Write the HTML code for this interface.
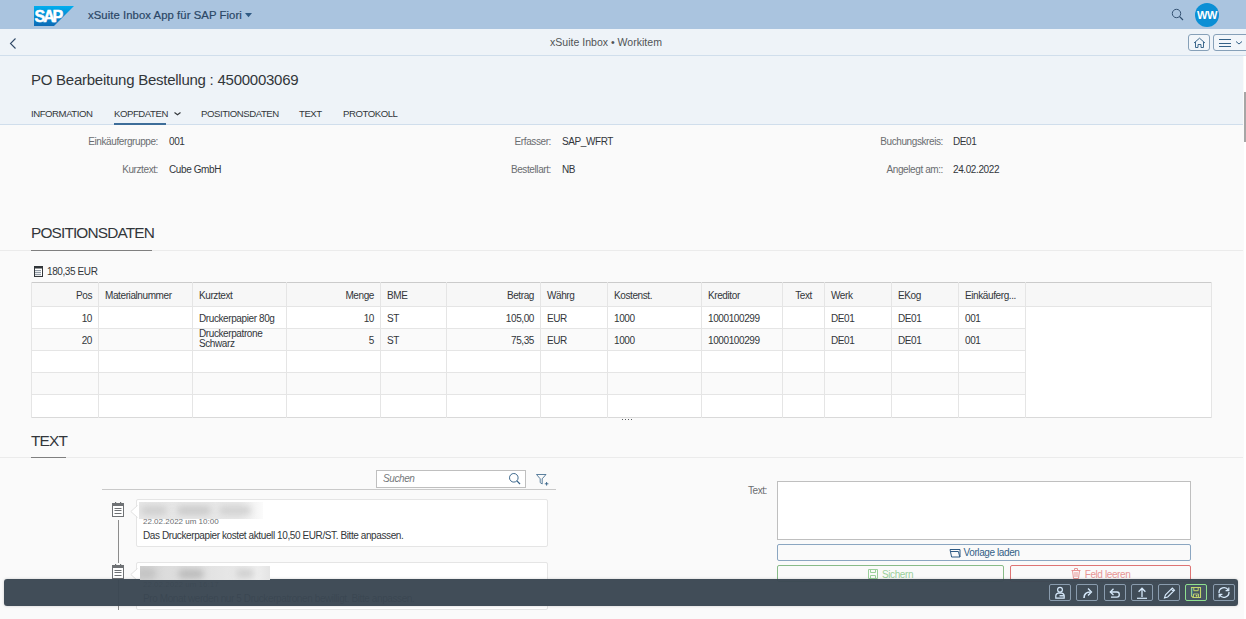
<!DOCTYPE html>
<html><head><meta charset="utf-8">
<style>
*{box-sizing:border-box;margin:0;padding:0}
html,body{width:1246px;height:619px;overflow:hidden;background:#fafafa;font-family:"Liberation Sans",sans-serif;color:#32363a}
.a{position:absolute;white-space:nowrap}
#shell{position:absolute;left:0;top:0;width:1246px;height:29px;background:#aac4df}
#nav{position:absolute;left:0;top:29px;width:1246px;height:27px;background:#eef3f8;border-bottom:1px solid #d0deec}
#hdr{position:absolute;left:0;top:56px;width:1243px;height:69px;background:#eef3f8;border-bottom:1px solid #d0deec}
.lbl{font-size:10px;letter-spacing:-0.4px;color:#6a6d70;text-align:right}
.val{font-size:10px;letter-spacing:-0.4px;color:#32363a}
.tab{font-size:9.6px;letter-spacing:-0.45px;color:#32363a;top:108px}
table{border-collapse:collapse;position:absolute;left:31px;top:282px;table-layout:fixed;background:#fff}
td,th{border:1px solid #e5e5e5;font-size:10px;letter-spacing:-0.4px;font-weight:normal;color:#32363a;height:22px;padding:0 5px;white-space:nowrap;overflow:hidden}
th{background:#f5f5f5;text-align:left;height:24px}
tr.alt td{background:#fafafa}
.r{text-align:right}

.hl{height:1px;background:#e5e5e5}
.vl{width:1px;background:#e5e5e5}
.tc{font-size:10px;letter-spacing:-0.4px;color:#32363a;padding:0 6px}
.l{text-align:left}.r{text-align:right}.c{text-align:center}
.card{position:absolute;left:136px;width:412px;height:48px;background:#fff;border:1px solid #e5e5e5;border-radius:2px}
.notch{position:absolute;left:131px;width:7px;height:10px;overflow:hidden}
.notch:before{content:"";position:absolute;left:3px;top:1px;width:7px;height:7px;background:#fff;border:1px solid #e5e5e5;transform:rotate(45deg)}
.blur{position:absolute;overflow:hidden}
.blur i{position:absolute;border-radius:5px;filter:blur(3px)}
.btn{font-size:10px;letter-spacing:-0.4px;border:1px solid;border-radius:2px;background:#fafafa;text-align:center;line-height:15px}
.fb{position:absolute;top:584px;width:22px;height:17px;border:1px solid #8a9cae;border-radius:2px;display:flex;align-items:center;justify-content:center}
</style></head><body>
<div id="shell">
  <svg class="a" style="left:34px;top:6px" width="40" height="20" viewBox="0 0 40 20">
    <defs><linearGradient id="g" x1="0" y1="0" x2="0" y2="1"><stop offset="0" stop-color="#00aeef"/><stop offset="1" stop-color="#0d6ab5"/></linearGradient></defs>
    <polygon points="0,0 40,0 20,20 0,20" fill="url(#g)"/>
    <text x="0.6" y="15.7" font-family="Liberation Sans" font-weight="bold" font-size="16" fill="#fff" stroke="#fff" stroke-width="0.5" letter-spacing="-2.1">SAP</text>
  </svg>
  <div class="a" style="left:88px;top:9px;font-size:11.3px;color:#2b4766;letter-spacing:0.07px;-webkit-text-stroke:0.2px #2b4766">xSuite Inbox App für SAP Fiori</div>
  <svg class="a" style="left:245px;top:13px" width="8" height="5"><polygon points="0,0 7,0 3.5,4.2" fill="#2f5a84"/></svg>
  <svg class="a" style="left:1171px;top:8px" width="14" height="14" viewBox="0 0 14 14"><circle cx="5.5" cy="5.5" r="4.2" fill="none" stroke="#2f4d6e" stroke-width="0.95"/><line x1="8.5" y1="8.5" x2="12" y2="12" stroke="#2f4d6e" stroke-width="1.1"/></svg>
  <div class="a" style="left:1195px;top:3px;width:24px;height:24px;border-radius:50%;background:#0b8fd5;color:#fff;font-weight:bold;font-size:11px;text-align:center;line-height:24px;letter-spacing:-0.5px">WW</div>
</div>
<div id="nav">
  <svg class="a" style="left:9px;top:9px" width="8" height="11" viewBox="0 0 8 11"><polyline points="6.5,0.5 1.5,5.5 6.5,10.5" fill="none" stroke="#2f4866" stroke-width="1.1"/></svg>
  <div class="a" style="left:550px;top:7px;font-size:10.55px;color:#515456">xSuite Inbox • Workitem</div>
  <div class="a" style="left:1188px;top:5px;width:22px;height:17px;border:1px solid #86a0b8;border-radius:3px;background:#f2f6fa"></div>
  <svg class="a" style="left:1193px;top:8px" width="13" height="12" viewBox="0 0 13 12"><path d="M1,6 L6.5,1.2 L12,6" fill="none" stroke="#346187" stroke-width="0.95"/><path d="M2.5,5 V10.5 H5 V7.5 H8 V10.5 H10.5 V5" fill="none" stroke="#346187" stroke-width="0.95"/></svg>
  <div class="a" style="left:1213px;top:5px;width:40px;height:17px;border:1px solid #86a0b8;border-radius:3px;background:#f2f6fa"></div>
  <svg class="a" style="left:1218px;top:9px" width="26" height="10" viewBox="0 0 26 10"><path d="M1,1.5 h12 M1,5.5 h12 M1,8.5 h12" stroke="#346187" stroke-width="1"/><path d="M18,3.5 L21,6 L24,3.5" fill="none" stroke="#346187" stroke-width="1"/></svg>
</div>
<div id="hdr">
  <div class="a" style="left:31px;top:15px;font-size:15px;letter-spacing:-0.25px;color:#32363a">PO Bearbeitung Bestellung : 4500003069</div>
</div>
<div class="a tab" style="left:31px">INFORMATION</div>
<div class="a tab" style="left:114px">KOPFDATEN</div>
<div class="a tab" style="left:201px">POSITIONSDATEN</div>
<div class="a tab" style="left:299px">TEXT</div>
<div class="a tab" style="left:343px">PROTOKOLL</div>
<svg class="a" style="left:173px;top:110px" width="9" height="6" viewBox="0 0 9 6"><path d="M1.5,2.5 L4.5,4.8 L7.5,2.5" fill="none" stroke="#32363a" stroke-width="1.1"/></svg>
<div class="a" style="left:114px;top:123px;width:52px;height:2px;background:#3d6d99"></div>
<div class="a" style="left:1244px;top:56px;width:2px;height:563px;background:#fff"></div>
<div class="a" style="left:1244px;top:92px;width:2px;height:50px;background:#a6a6a6"></div>

<div class="a lbl" style="right:1088px;top:136px">Einkäufergruppe:</div>
<div class="a val" style="left:169px;top:136px">001</div>
<div class="a lbl" style="right:1088px;top:164px">Kurztext:</div>
<div class="a val" style="left:169px;top:164px">Cube GmbH</div>
<div class="a lbl" style="right:695px;top:136px">Erfasser:</div>
<div class="a val" style="left:562px;top:136px">SAP_WFRT</div>
<div class="a lbl" style="right:695px;top:164px">Bestellart:</div>
<div class="a val" style="left:562px;top:164px">NB</div>
<div class="a lbl" style="right:303px;top:136px">Buchungskreis:</div>
<div class="a val" style="left:953px;top:136px">DE01</div>
<div class="a lbl" style="right:303px;top:164px">Angelegt am::</div>
<div class="a val" style="left:953px;top:164px">24.02.2022</div>

<div class="a" style="left:0;top:250px;width:1243px;height:1px;background:#ebebeb"></div>
<div class="a" style="left:31px;top:224px;font-size:15.4px;letter-spacing:-0.85px;color:#32363a">POSITIONSDATEN</div>
<div class="a" style="left:31px;top:250px;width:121px;height:1px;background:#7f7f7f"></div>

<svg class="a" style="left:33px;top:265px" width="10" height="12" viewBox="0 0 10 12"><rect x="1.5" y="1.5" width="8" height="10" fill="#fff" stroke="#32363a" stroke-width="1"/><rect x="1" y="1" width="9" height="2.5" fill="#32363a"/><rect x="2.4" y="5" width="1.2" height="1.2" fill="#4a5a6a"/><rect x="4.4" y="5" width="1.2" height="1.2" fill="#4a5a6a"/><rect x="6.4" y="5" width="1.2" height="1.2" fill="#4a5a6a"/><rect x="2.4" y="7" width="1.2" height="1.2" fill="#4a5a6a"/><rect x="4.4" y="7" width="1.2" height="1.2" fill="#4a5a6a"/><rect x="6.4" y="7" width="1.2" height="1.2" fill="#4a5a6a"/><rect x="2.4" y="9" width="1.2" height="1.2" fill="#4a5a6a"/><rect x="4.4" y="9" width="1.2" height="1.2" fill="#4a5a6a"/><rect x="6.4" y="9" width="1.2" height="1.2" fill="#4a5a6a"/></svg>
<div class="a val" style="left:47px;top:266px">180,35 EUR</div>

<div class="a" style="left:0;top:457px;width:1243px;height:1px;background:#ebebeb"></div>
<div class="a" style="left:31px;top:432px;font-size:15.4px;letter-spacing:-0.85px;color:#32363a">TEXT</div>
<div class="a" style="left:31px;top:457px;width:35px;height:1px;background:#7f7f7f"></div>

<div class="a" style="left:31px;top:282px;width:1181px;height:136px;background:#fff"></div>
<div class="a" style="left:31px;top:282px;width:1181px;height:25px;background:#f7f7f7"></div>
<div class="a" style="left:31px;top:328px;width:994px;height:22px;background:#fafafa"></div>
<div class="a" style="left:31px;top:372px;width:994px;height:22px;background:#fafafa"></div>
<div class="a hl" style="left:31px;top:282px;width:1181px;background:#cbcbcb"></div>
<div class="a hl" style="left:31px;top:306px;width:1181px"></div>
<div class="a hl" style="left:31px;top:328px;width:994px"></div>
<div class="a hl" style="left:31px;top:350px;width:994px"></div>
<div class="a hl" style="left:31px;top:372px;width:994px"></div>
<div class="a hl" style="left:31px;top:394px;width:994px"></div>
<div class="a hl" style="left:31px;top:417px;width:1181px;background:#d9d9d9"></div>
<div class="a" style="left:622px;top:419px;width:10px;height:1px;background:repeating-linear-gradient(90deg,#5a5d60 0 1.5px,transparent 1.5px 3px)"></div>
<div class="a vl" style="left:31px;top:282px;height:136px"></div>
<div class="a vl" style="left:98px;top:282px;height:136px"></div>
<div class="a vl" style="left:192px;top:282px;height:136px"></div>
<div class="a vl" style="left:286px;top:282px;height:136px"></div>
<div class="a vl" style="left:380px;top:282px;height:136px"></div>
<div class="a vl" style="left:446px;top:282px;height:136px"></div>
<div class="a vl" style="left:540px;top:282px;height:136px"></div>
<div class="a vl" style="left:607px;top:282px;height:136px"></div>
<div class="a vl" style="left:701px;top:282px;height:136px"></div>
<div class="a vl" style="left:782px;top:282px;height:136px"></div>
<div class="a vl" style="left:824px;top:282px;height:136px"></div>
<div class="a vl" style="left:891px;top:282px;height:136px"></div>
<div class="a vl" style="left:958px;top:282px;height:136px"></div>
<div class="a vl" style="left:1025px;top:282px;height:136px"></div>
<div class="a vl" style="left:1211px;top:282px;height:136px"></div>
<div class="a tc r" style="left:32px;top:290px;width:66px">Pos</div>
<div class="a tc l" style="left:99px;top:290px;width:93px">Materialnummer</div>
<div class="a tc l" style="left:193px;top:290px;width:93px">Kurztext</div>
<div class="a tc r" style="left:287px;top:290px;width:93px">Menge</div>
<div class="a tc l" style="left:381px;top:290px;width:65px">BME</div>
<div class="a tc r" style="left:447px;top:290px;width:93px">Betrag</div>
<div class="a tc l" style="left:541px;top:290px;width:66px">Währg</div>
<div class="a tc l" style="left:608px;top:290px;width:93px">Kostenst.</div>
<div class="a tc l" style="left:702px;top:290px;width:80px">Kreditor</div>
<div class="a tc c" style="left:783px;top:290px;width:41px">Text</div>
<div class="a tc l" style="left:825px;top:290px;width:66px">Werk</div>
<div class="a tc l" style="left:892px;top:290px;width:66px">EKog</div>
<div class="a tc l" style="left:959px;top:290px;width:66px">Einkäuferg...</div>
<div class="a tc r" style="left:32px;top:313px;width:66px">10</div>
<div class="a tc l" style="left:193px;top:313px;width:93px">Druckerpapier 80g</div>
<div class="a tc r" style="left:287px;top:313px;width:93px">10</div>
<div class="a tc l" style="left:381px;top:313px;width:65px">ST</div>
<div class="a tc r" style="left:447px;top:313px;width:93px">105,00</div>
<div class="a tc l" style="left:541px;top:313px;width:66px">EUR</div>
<div class="a tc l" style="left:608px;top:313px;width:93px">1000</div>
<div class="a tc l" style="left:702px;top:313px;width:80px">1000100299</div>
<div class="a tc l" style="left:825px;top:313px;width:66px">DE01</div>
<div class="a tc l" style="left:892px;top:313px;width:66px">DE01</div>
<div class="a tc l" style="left:959px;top:313px;width:66px">001</div>
<div class="a tc r" style="left:32px;top:335px;width:66px">20</div>
<div class="a tc l" style="left:193px;top:329px;width:93px;line-height:10px">Druckerpatrone<br>Schwarz</div>
<div class="a tc r" style="left:287px;top:335px;width:93px">5</div>
<div class="a tc l" style="left:381px;top:335px;width:65px">ST</div>
<div class="a tc r" style="left:447px;top:335px;width:93px">75,35</div>
<div class="a tc l" style="left:541px;top:335px;width:66px">EUR</div>
<div class="a tc l" style="left:608px;top:335px;width:93px">1000</div>
<div class="a tc l" style="left:702px;top:335px;width:80px">1000100299</div>
<div class="a tc l" style="left:825px;top:335px;width:66px">DE01</div>
<div class="a tc l" style="left:892px;top:335px;width:66px">DE01</div>
<div class="a tc l" style="left:959px;top:335px;width:66px">001</div>
<!-- TEXT section -->
<div class="a" style="left:376px;top:470px;width:150px;height:18px;border:1px solid #bfbfbf;background:#fff"></div>
<div class="a" style="left:383px;top:473px;font-size:10px;letter-spacing:-0.4px;font-style:italic;color:#74777a">Suchen</div>
<svg class="a" style="left:508px;top:472px" width="14" height="14" viewBox="0 0 14 14"><circle cx="5.8" cy="5.8" r="4.3" fill="none" stroke="#346187" stroke-width="0.95"/><line x1="8.9" y1="8.9" x2="12" y2="12" stroke="#346187" stroke-width="1.2"/></svg>
<svg class="a" style="left:535px;top:473px" width="15" height="14" viewBox="0 0 15 14"><path d="M1.5,1.5 H11 L7.2,5.8 V11 L5.2,9.6 V5.8 Z" fill="none" stroke="#346187" stroke-width="0.8"/><path d="M9.8,10.8 h3.6 M11.6,9 v3.6" stroke="#346187" stroke-width="0.9"/></svg>
<div class="a" style="left:102px;top:489px;width:454px;height:1px;background:#c9c9c9"></div>

<div class="a" style="left:118px;top:520px;width:1px;height:43px;background:#8c8c8c"></div>
<div class="a" style="left:118px;top:580px;width:1px;height:30px;background:#8c8c8c"></div>

<div class="card" style="top:499px"></div>
<svg class="a" style="left:130px;top:505px" width="8" height="13" viewBox="0 0 8 13"><path d="M7.5,0.5 L0.8,6.5 L7.5,12.5" fill="#fff" stroke="#e0e0e0" stroke-width="1"/><rect x="7" y="1.2" width="1" height="10.6" fill="#fff"/></svg>
<div class="blur" style="left:139px;top:502px;width:124px;height:17px;background:linear-gradient(90deg,#e6e6e6 0%,#e8e8e8 80%,#fbfbfb 100%)"><i style="left:2px;top:4px;width:26px;height:9px;background:#cfcfcf"></i><i style="left:38px;top:4px;width:34px;height:9px;background:#cbcbcb"></i><i style="left:80px;top:4px;width:32px;height:9px;background:#d2d2d2"></i></div>
<div class="a" style="left:143px;top:517px;font-size:8px;color:#6a6d70">22.02.2022 um 10:00</div>
<div class="a" style="left:143px;top:530px;font-size:10px;letter-spacing:-0.4px;color:#32363a">Das Druckerpapier kostet aktuell 10,50 EUR/ST. Bitte anpassen.</div>
<svg class="a ic" style="left:111px;top:501px" width="14" height="17" viewBox="0 0 14 17"><rect x="1.5" y="2.5" width="11" height="13" fill="#fff" stroke="#6f7275" stroke-width="1"/><rect x="1" y="2" width="12" height="3" fill="#6f7275"/><rect x="4" y="1" width="1.2" height="2" fill="#6f7275"/><rect x="9" y="1" width="1.2" height="2" fill="#6f7275"/><path d="M3.5,7.5 h7 M3.5,9.5 h7 M3.5,12.5 h7" stroke="#6f7275" stroke-width="1"/></svg>

<div class="card" style="top:562px"></div>
<svg class="a" style="left:130px;top:568px" width="8" height="13" viewBox="0 0 8 13"><path d="M7.5,0.5 L0.8,6.5 L7.5,12.5" fill="#fff" stroke="#e0e0e0" stroke-width="1"/><rect x="7" y="1.2" width="1" height="10.6" fill="#fff"/></svg>

<div class="a" style="left:143px;top:580px;font-size:8px;color:#6a6d70">22.02.2022 um 16:17</div>
<div class="a" style="left:143px;top:593px;font-size:10px;letter-spacing:-0.4px;color:#32363a">Pro Monat werden nur 5 Druckerpatronen bewilligt. Bitte anpassen.</div>
<svg class="a ic" style="left:111px;top:563px" width="14" height="17" viewBox="0 0 14 17"><rect x="1.5" y="2.5" width="11" height="13" fill="#fff" stroke="#6f7275" stroke-width="1"/><rect x="1" y="2" width="12" height="3" fill="#6f7275"/><rect x="4" y="1" width="1.2" height="2" fill="#6f7275"/><rect x="9" y="1" width="1.2" height="2" fill="#6f7275"/><path d="M3.5,7.5 h7 M3.5,9.5 h7 M3.5,12.5 h7" stroke="#6f7275" stroke-width="1"/></svg>

<div class="a lbl" style="right:479px;top:485px">Text:</div>
<div class="a" style="left:777px;top:481px;width:414px;height:59px;border:1px solid #bfbfbf;background:#fff"></div>
<div class="a btn" style="left:777px;top:544px;width:414px;height:17px;border-color:#8ba6c1;color:#346187"><svg width="12" height="10" viewBox="0 0 12 10" style="vertical-align:-2px;margin-right:3px"><path d="M1,1.5 H11 V9 H2.6 L1,1.5 Z" fill="none" stroke="#2f5a84" stroke-width="1"/><path d="M1.5,3.5 H9.4 L10.8,9" fill="none" stroke="#2f5a84" stroke-width="1"/></svg>Vorlage laden</div>
<div class="a btn" style="left:777px;top:565px;width:227px;height:17px;border-color:#88bb88;color:#9bd09b;line-height:17px"><svg width="10" height="10" viewBox="0 0 10 10" style="vertical-align:-1px;margin-right:4px"><path d="M0.5,0.5 h9 v9 h-9 Z M2.5,0.5 v3 h5 v-3 M2.5,9.5 v-3 h5 v3" fill="none" stroke="#9bd09b" stroke-width="1"/></svg>Sichern</div>
<div class="a btn" style="left:1010px;top:565px;width:181px;height:17px;border-color:#de7474;color:#e89595;line-height:17px"><svg width="10" height="11" viewBox="0 0 10 11" style="vertical-align:-1px;margin-right:4px"><path d="M0.5,2.5 h9 M3.5,2.5 v-2 h3 v2 M1.5,2.5 l1,8 h5 l1,-8 M4,4 v5 M6,4 v5" fill="none" stroke="#e89595" stroke-width="1"/></svg>Feld leeren</div>

<!-- footer -->
<div class="a" style="left:4px;top:579px;width:1234px;height:27px;background:rgba(59,71,83,0.97);border-radius:3px;box-shadow:0 0 3px rgba(0,0,0,0.18)"></div>

<div class="fb" style="left:1049px"><svg width="20" height="15" viewBox="0 0 20 15"><circle cx="10" cy="4.8" r="2.4" fill="none" stroke="#d6e9fb" stroke-width="1.2"/><path d="M5.8,13.2 v-2.3 q0,-2.8 4.2,-3 q4.2,0.2 4.2,3 v2.3 Z" fill="none" stroke="#d6e9fb" stroke-width="1.2"/><path d="M9.5,10.8 h4.7" stroke="#d6e9fb" stroke-width="1.4"/></svg></div>
<div class="fb" style="left:1076px"><svg width="20" height="15" viewBox="0 0 20 15"><path d="M7,13 q0,-6 6.5,-6" fill="none" stroke="#d6e9fb" stroke-width="1.6"/><path d="M11,3.5 L14.5,7 L11,10.5" fill="none" stroke="#d6e9fb" stroke-width="1.3"/></svg></div>
<div class="fb" style="left:1104px"><svg width="20" height="15" viewBox="0 0 20 15"><path d="M5.5,7 h6.5 q2.3,0 2.3,2.6 q0,2.6 -2.3,2.6 h-6" fill="none" stroke="#d6e9fb" stroke-width="1.3"/><path d="M8.5,3.8 L5.3,7 L8.5,10" fill="none" stroke="#d6e9fb" stroke-width="1.3"/></svg></div>
<div class="fb" style="left:1131px"><svg width="20" height="15" viewBox="0 0 20 15"><path d="M10,12 V3.5 M6.6,6.8 L10,3.3 L13.4,6.8" fill="none" stroke="#d6e9fb" stroke-width="1.3"/><path d="M5,13.3 h10" stroke="#d6e9fb" stroke-width="1.2"/></svg></div>
<div class="fb" style="left:1158px"><svg width="20" height="15" viewBox="0 0 20 15"><path d="M5.5,13 l1,-3.2 l6.8,-6.8 l2.2,2.2 l-6.8,6.8 Z M12.2,4.2 l2.2,2.2" fill="none" stroke="#d6e9fb" stroke-width="1.1"/></svg></div>
<div class="fb" style="left:1185px;border-color:#8fe08f;background:rgba(80,95,110,0.45)"><svg width="20" height="15" viewBox="0 0 20 15"><path d="M5.5,2.5 h9 v10 h-7.5 l-1.5,-1.5 Z" fill="none" stroke="#c4d66a" stroke-width="1.1"/><path d="M7.8,2.5 v3.2 h4.4 v-3.2" fill="none" stroke="#c4d66a" stroke-width="1"/><path d="M7.5,12.5 v-3.5 h5 v3.5" fill="none" stroke="#b8cc70" stroke-width="1"/><rect x="9.8" y="10" width="1.6" height="1.6" fill="#d0d870"/><path d="M6,3 v7.5" stroke="#3fb7c8" stroke-width="0.7"/></svg></div>
<div class="fb" style="left:1213px"><svg width="20" height="15" viewBox="0 0 20 15"><path d="M5,8 a5,5 0 0 1 9.3,-2.8" fill="none" stroke="#d6e9fb" stroke-width="1.3"/><path d="M15,7 a5,5 0 0 1 -9.3,2.8" fill="none" stroke="#d6e9fb" stroke-width="1.3"/><path d="M14.8,2.5 v3.2 h-3.2 M5.2,12.5 v-3.2 h3.2" fill="none" stroke="#d6e9fb" stroke-width="1.2"/></svg></div>

<div class="blur" style="left:140px;top:566px;width:130px;height:14px;background:linear-gradient(90deg,#d2d2d2 0%,#dcdcdc 20%,#e2e2e2 50%,#e8e8e8 75%,#eeeeee 90%,#e4e4e4 100%)"><i style="left:-4px;top:2px;width:20px;height:11px;background:#c4c4c4"></i><i style="left:38px;top:3px;width:26px;height:10px;background:#bdbdbd"></i><i style="left:96px;top:3px;width:18px;height:9px;background:#d0d0d0"></i></div>
</body></html>
